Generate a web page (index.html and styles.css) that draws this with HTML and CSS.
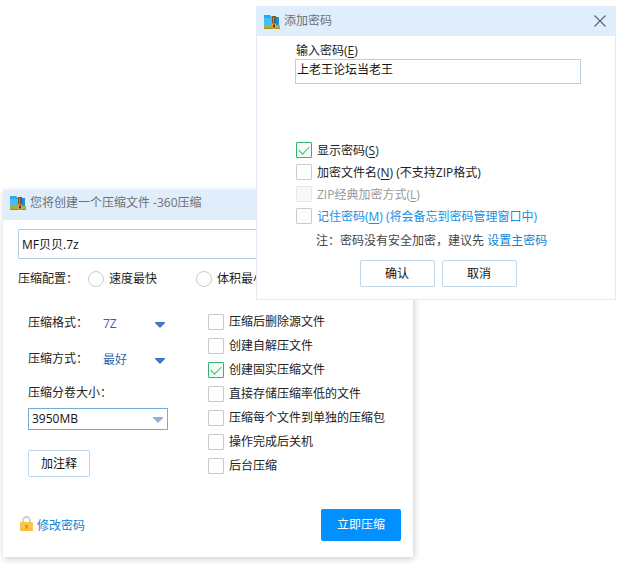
FILE: index.html
```html
<!DOCTYPE html>
<html lang="zh-CN">
<head>
<meta charset="utf-8">
<title>360压缩</title>
<link rel="stylesheet" href="styles.css">
</head>
<body>
<svg width="0" height="0" class="sprite" aria-hidden="true">
  <symbol id="archive" viewBox="0 0 16 16">
    <path d="M0 1h6l2 2h7v10H0z" fill="#2fa9ea"/>
    <path d="M0 4h8v8H0z" fill="#45bdf6"/>
    <path d="M12 3h3v9h-3z" fill="#1c8fd8"/>
    <path d="M0 11h16v4H0z" fill="#b3ad3c"/>
    <path d="M0 14h16v1H0z" fill="#94902f"/>
    <path d="M8 2h4v12H8z" fill="#7c5427"/>
    <path d="M9.500 3v6" stroke="#c08a48"/>
    <path d="M8 9.500h4v5H8z" fill="#f0a63a"/>
    <path d="M9 10.500h2v3H9z" fill="#5b3518"/>
  </symbol>
  <symbol id="arrow" viewBox="0 0 10 6"><path d="M0 0h10v1L5 6 0 1z" fill="currentColor"/></symbol>
</svg>
<div class="desktop">
  <form class="window main">
    <header class="titlebar">
      <svg class="app-icon"><use href="#archive"/></svg>
      <h1>您将创建一个压缩文件 -360压缩</h1>
    </header>
    <div class="main-body">
      <input class="filename" type="text" value="MF贝贝.7z" aria-label="文件名">
      <div class="presets">
        <span class="preset-title">压缩配置：</span>
        <label class="choice"><input type="radio" name="preset">速度最快</label>
        <label class="choice"><input type="radio" name="preset">体积最小</label>
      </div>
      <div class="settings">
        <div class="left">
          <div class="field">
            <label for="format">压缩格式：</label>
            <span class="picker"><select id="format"><option>7Z</option></select><svg><use href="#arrow"/></svg></span>
          </div>
          <div class="field">
            <label for="method">压缩方式：</label>
            <span class="picker"><select id="method"><option>最好</option></select><svg><use href="#arrow"/></svg></span>
          </div>
          <label class="volume-label" for="volume">压缩分卷大小：</label>
          <span class="picker boxed"><select id="volume"><option>3950MB</option></select><svg><use href="#arrow"/></svg></span>
          <button class="btn comment" type="button">加注释</button>
        </div>
        <div class="right">
          <label class="choice"><input type="checkbox">压缩后删除源文件</label>
          <label class="choice"><input type="checkbox">创建自解压文件</label>
          <label class="choice"><input type="checkbox" checked>创建固实压缩文件</label>
          <label class="choice"><input type="checkbox">直接存储压缩率低的文件</label>
          <label class="choice"><input type="checkbox">压缩每个文件到单独的压缩包</label>
          <label class="choice"><input type="checkbox">操作完成后关机</label>
          <label class="choice"><input type="checkbox">后台压缩</label>
        </div>
      </div>
      <footer>
        <a class="password-link" href="#password">
          <svg viewBox="0 0 14 16"><path d="M3 7V4.500a3.500 3.500 0 0 1 7 0V7" fill="none" stroke="#c9ccd2" stroke-width="1.800"/><rect y="6" width="13" height="9" rx="1" fill="#fbc64c"/><path d="M0 12h13v2a1 1 0 0 1-1 1H1a1 1 0 0 1-1-1z" fill="#f8bf42"/><path d="M5 9h3v2l-1 2H6l-1-2z" fill="#d9982a"/></svg>
          修改密码</a>
        <button class="start" type="button">立即压缩</button>
      </footer>
    </div>
  </form>

  <form class="window dialog">
    <header class="titlebar">
      <svg class="app-icon"><use href="#archive"/></svg>
      <h2>添加密码</h2>
      <button class="close" type="button" aria-label="关闭"><svg viewBox="0 0 12 12"><path d="M.5.5l11 11M11.500.5l-11 11" fill="none" stroke="#5c6878" stroke-width="1.200"/></svg></button>
    </header>
    <div class="dialog-body">
      <label class="password-label" for="password">输入密码(<u>E</u>)</label>
      <input class="password" id="password" type="text" value="上老王论坛当老王">
      <div class="switches">
        <label class="choice"><input type="checkbox" checked><span>显示密码(<u>S</u>)</span></label>
        <label class="choice"><input type="checkbox"><span>加密文件名(<u>N</u>) (不支持ZIP格式)</span></label>
        <label class="choice off"><input type="checkbox" disabled><span>ZIP经典加密方式(<u>L</u>)</span></label>
        <label class="choice remember"><input type="checkbox"><span>记住密码(<u>M</u>) (将会备忘到密码管理窗口中)</span></label>
      </div>
      <p class="note">注：密码没有安全加密，建议先 <a href="#master">设置主密码</a></p>
    </div>
    <div class="actions">
      <button class="btn" type="button">确认</button>
      <button class="btn" type="button">取消</button>
    </div>
  </form>
</div>
</body>
</html>
```
FILE: styles.css
```css
* { box-sizing: border-box; }

body {
  margin: 0;
  background: #fff;
  color: #222;
  font: 12px/16px "Open Sans", "Noto Sans CJK SC", sans-serif;
}

.sprite { position: absolute; }

input, select, button {
  margin: 0;
  font: inherit;
  color: #111;
}

a { color: #0d84d2; text-decoration: none; }
u { text-underline-offset: 2px; }

.desktop { position: relative; min-height: 100vh; overflow: hidden; }

.window { position: absolute; background: #fff; }
.main { top: 190px; left: 3px; right: 208px; box-shadow: 1px 2px 7px rgba(0, 0, 0, .2); }
.dialog { top: 6px; left: 256px; right: 5px; border: 1px solid #e0e9f6; border-top: 0; }

.titlebar {
  display: flex;
  align-items: center;
  gap: 4px;
  height: 30px;
  padding: 0 7px;
  background: #e0edfb;
}
.titlebar h1, .titlebar h2 {
  flex: 1;
  margin: 0;
  font-size: 12px;
  font-weight: 400;
  color: #6b7178;
}
.app-icon { width: 16px; height: 16px; }
.main .titlebar { padding-bottom: 4px; }
.dialog .titlebar { margin: 0 -1px; padding-right: 10px; padding-left: 8px; }
.dialog .app-icon { margin-top: 2px; }
.close { display: flex; padding: 0; border: 0; background: none; }
.close svg { width: 12px; height: 12px; }

.main-body { padding: 9px 15px 16px; }

.filename {
  display: block;
  width: 100%;
  height: 30px;
  padding: 0 3px;
  border: 1px solid #b4cce2;
  border-radius: 1px;
}

.presets { display: flex; align-items: center; height: 39px; }
.presets .preset-title { width: 70px; }
.presets .choice { width: 108px; }

.choice { display: flex; align-items: center; gap: 5px; }

input[type="checkbox"], input[type="radio"] {
  appearance: none;
  display: grid;
  flex: none;
  place-items: center;
  width: 16px;
  height: 16px;
  border: 1px solid #cbcbcd;
  border-radius: 1px;
  background: #fff;
}
input[type="radio"] { border-radius: 50%; }
input[type="checkbox"]:checked { border-color: #35b36c; background: #f3fcf6; }
input[type="checkbox"]:checked::before {
  content: "";
  width: 9px;
  height: 5px;
  margin-bottom: 3px;
  border: solid #45b578;
  border-width: 0 0 1px 1px;
  rotate: -45deg;
}
input[type="checkbox"]:disabled { border-color: #e6e6e6; background: #f8f8f8; }

.settings {
  display: grid;
  grid-template-columns: 140px 1fr;
  column-gap: 40px;
  padding: 12px 10px 0;
}
.left { display: flex; flex-direction: column; align-items: stretch; padding-top: 5px; }
.right { display: flex; flex-direction: column; gap: 8px; padding-top: 4px; }
.right .choice { height: 16px; white-space: nowrap; }

.field { display: flex; align-items: center; height: 16px; margin-bottom: 20px; }
.field label { width: 75px; }
.picker { display: grid; flex: 1; align-items: center; }
.field .picker { padding-top: 2px; }
.picker select, .picker svg { grid-area: 1 / 1; }
.picker select {
  appearance: none;
  width: 100%;
  height: 18px;
  padding: 0;
  border: 0;
  background: none;
  color: #3163a8;
}
.picker svg {
  justify-self: end;
  width: 10px;
  height: 6px;
  margin-top: 2px;
  margin-right: 3px;
  color: #3d78c5;
  pointer-events: none;
}
.volume-label { margin: -2px 0 7px; }
.picker.boxed { flex: none; height: 22px; border: 1px solid #74add8; }
.picker.boxed select { height: 20px; padding: 0 3px; color: #111; }
.picker.boxed svg { margin-right: 4px; color: #91b0dd; }

.btn {
  height: 27px;
  padding: 0;
  border: 1px solid #c0d6ea;
  border-radius: 2px;
  background: #fff;
}
.comment { width: 62px; margin-top: 20px; }

footer {
  display: flex;
  align-items: center;
  justify-content: space-between;
  margin-top: 32px;
  padding-left: 2px;
}
.password-link { display: flex; align-items: center; gap: 3px; padding-top: 2px; }
.password-link svg { width: 14px; height: 16px; margin-bottom: 4px; }
.start {
  width: 80px;
  height: 32px;
  margin-right: -3px;
  border: 0;
  border-radius: 2px;
  background: #0090ff;
  color: #fff;
}

.dialog-body { padding: 7px 34px 0 38px; }
.password-label { display: block; padding-left: 1px; }
.password {
  display: block;
  width: 100%;
  height: 25px;
  padding: 0 1px 5px;
  border: 1px solid #b9cfe1;
}
.switches { display: grid; gap: 6px; margin-top: 58px; padding-left: 1px; }
.switches .choice { height: 16px; white-space: nowrap; }
.switches span { padding-top: 1px; }
.off { color: #999; }
.remember { color: #1590e4; }
.note { margin: 9px 0 0 21px; color: #444; white-space: nowrap; }
.actions { display: flex; justify-content: center; gap: 7px; padding: 11px 0 12px 4px; }
.actions .btn { width: 75px; }
```
